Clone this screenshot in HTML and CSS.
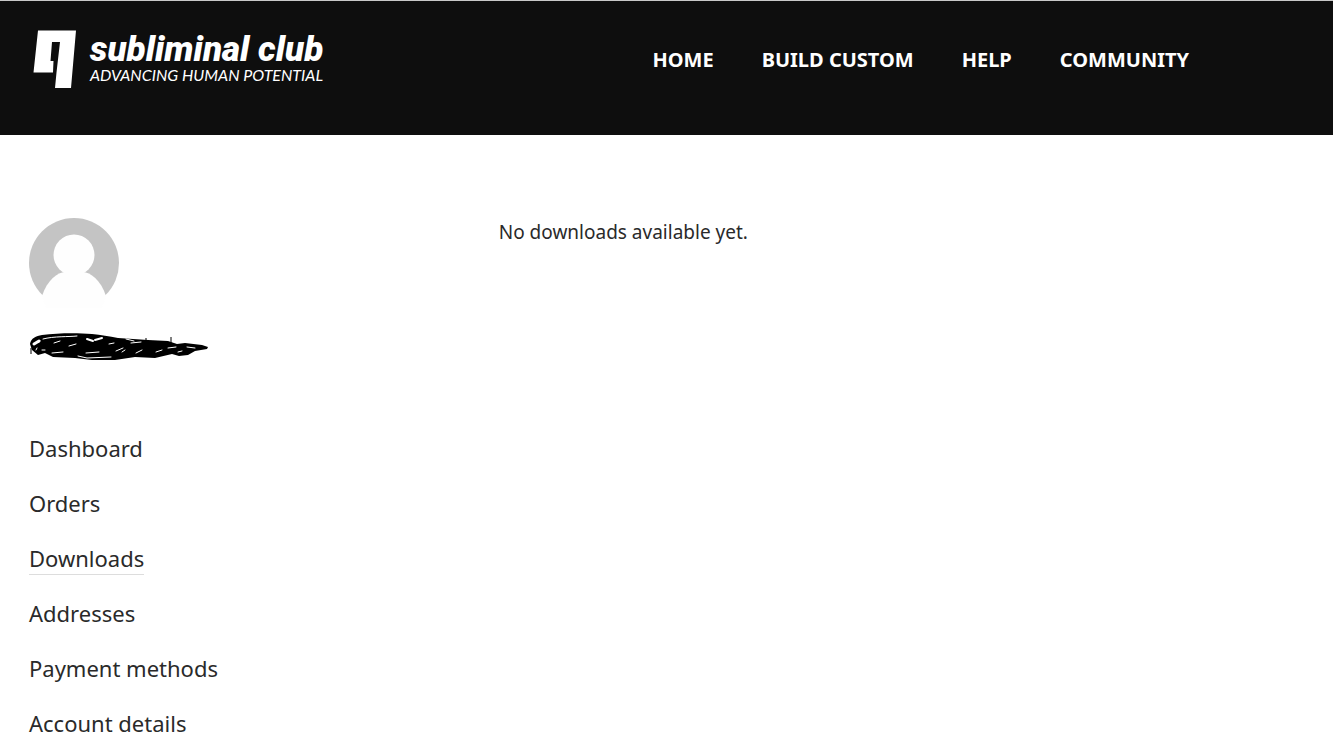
FILE: index.html
```
<!DOCTYPE html>
<html lang="en">
  <head>
    <meta charset="utf-8">
    <title>Downloads - Subliminal Club</title>
    <link rel="stylesheet" href="styles.css">
  </head>
  <body>
    <header class="site-header">
      <a class="logo" href="#">
        <svg class="logo-mark" viewBox="0 0 44 60" width="44" height="60" aria-hidden="true">
          <path fill="#fff" fill-rule="evenodd" d="M5 1.500H43L38 59H22L23.500 43.500H.5ZM19 13L17.500 32H20.500L20 43.500H23.500L27 13Z"/>
        </svg>
        <span class="logo-text">
          <span class="logo-name">subliminal club</span>
          <span class="logo-tagline">ADVANCING HUMAN POTENTIAL</span>
        </span>
      </a>
      <nav class="main-nav">
        <a href="#">HOME</a>
        <a href="#">BUILD CUSTOM</a>
        <a href="#">HELP</a>
        <a href="#">COMMUNITY</a>
      </nav>
    </header>
    <main class="account">
      <aside class="sidebar">
        <svg class="avatar" viewBox="0 0 90 90" width="90" height="90" role="img" aria-label="Avatar">
          <circle cx="45" cy="45" r="45" fill="#c4c4c4"/>
          <circle cx="45" cy="37" r="20.500" fill="#fefefe"/>
          <path fill="#fefefe" d="M13 78C18 62 29 54 36 54H54C61 54 72 62 77 78L72 91H18Z"/>
        </svg>
        <svg class="username" viewBox="0 0 184 32" width="184" height="32" aria-hidden="true">
          <path d="M1 14C2 8 7 6 13 5C29 3 48 3 63 4C72 5 80 6 89 8L119 10L139 11L148 14L156 13L173 15L179 17L178 19L166 21L159 25L150 26L143 24L126 28L106 27L86 30H63L46 28L24 27L16 23L9 25L3 20Z"/>
          <g fill="none" stroke="#fff" stroke-width="1" stroke-linecap="round">
            <path stroke-width="3" d="M5 14L10 11"/>
            <path d="M14 9C25 6 40 7 48 6"/>
            <path stroke-width="2" d="M58 9L64 11M66 10L73 8"/>
            <path d="M25 13L31 11M40 16L47 14M23 23L34 22M49 26L58 28L82 27M57 23L70 22"/>
            <path d="M87 21L94 18M93 22L96 20M102 13L112 12M107 23L113 20M127 22L133 20M139 18L147 17M158 17L166 18M149 22L153 21"/>
            <path d="M7 20L8 18M13 20H16M97 9L105 11M80 14L85 13"/>
          </g>
          <path fill="none" stroke="#000" stroke-width="1" d="M2 18V24M117 8V12M142 7V13"/>
        </svg>
        <nav class="account-nav">
          <a href="#">Dashboard</a>
          <a href="#">Orders</a>
          <a href="#" class="active">Downloads</a>
          <a href="#">Addresses</a>
          <a href="#">Payment methods</a>
          <a href="#">Account details</a>
        </nav>
      </aside>
      <section class="content">
        <p>No downloads available yet.</p>
      </section>
    </main>
  </body>
</html>
```
FILE: styles.css
```
* { box-sizing: border-box; }
body { margin: 0; background: #fff; color: #2a2a2a; font-family: "Noto Sans", sans-serif; }
a { color: inherit; text-decoration: none; }

.site-header { display: flex; align-items: flex-start; justify-content: space-between; height: 135px; padding: 28px 144px 0 33px; background: #0e0e0e; border-top: 1px solid #c8c8c8; color: #fff; }
.logo { display: flex; gap: 13px; }
.logo-text { display: flex; flex-direction: column; white-space: nowrap; }
.logo-name { font: italic 900 35px/38px Roboto, sans-serif; padding-top: 2px; }
.logo-tagline { font: italic 400 16px/12px Lato, sans-serif; }
.main-nav { display: flex; gap: 48px; font-size: 20px; font-weight: 700; line-height: 62px; white-space: nowrap; }

.account { display: grid; grid-template-columns: 7fr 12fr; padding: 83px 29px 0; }
.sidebar { display: flex; flex-direction: column; align-items: flex-start; }
.avatar { display: block; }
.username { display: block; margin-top: 22px; }
.account-nav { display: flex; flex-direction: column; align-items: flex-start; gap: 24px; margin-top: 72px; font-size: 22px; line-height: 28px; }
.account-nav a { padding-bottom: 2px; border-bottom: 1px solid transparent; }
.account-nav .active { border-color: #ddd; }
.content { font-size: 19px; line-height: 28px; }
.content p { margin: 0; }
```
